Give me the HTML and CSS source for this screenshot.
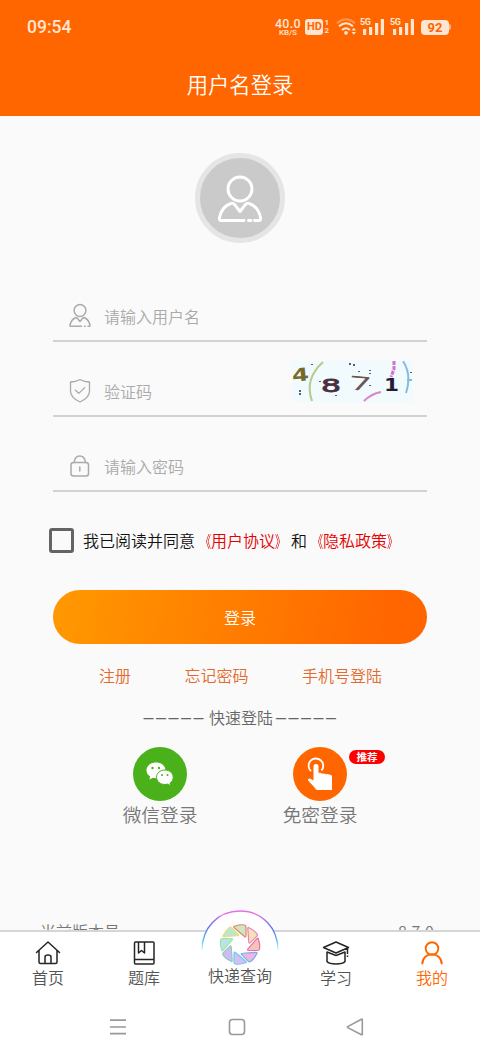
FILE: index.html
```html
<!DOCTYPE html>
<html lang="zh-CN">
<head>
<meta charset="utf-8">
<title>用户名登录</title>
<link rel="stylesheet" href="styles.css">
</head>
<body>
<div class="app">
  <header class="header">
    <div class="status">
      <span class="clock">09:54</span>
      <div class="indicators">
        <div class="speed"><span class="rate">40.0</span><span class="unit">KB/S</span></div>
        <span class="hd">HD</span>
        <div class="sims"><span>1</span><span>2</span></div>
        <svg class="wifi" width="21" height="18" viewBox="0 0 21 18" fill="none" stroke="#ffe5d2" stroke-width="2">
          <path d="M1 5.2Q10 -2.5 19 5.2" opacity=".35"/><path d="M3 8.3Q10 2.3 17 8.3"/><path d="M6 12Q10 8.400 14 12"/><circle cx="10" cy="14.800" r="1.900" fill="#ffe5d2" stroke="none"/><path d="M15.500 12.600l2.300-2.800 2.300 2.800zM15.500 14l2.300 2.800 2.300-2.800z" fill="#ffe5d2" stroke="none"/>
        </svg>
        <div class="signal"><span>5G</span><svg width="23" height="18" viewBox="0 0 23 18" fill="#ffe5d2"><path d="M2 11h3.200v6H2zM8 9h3.200v8H8zM14 5h3.200v12H14zM19.800 1H23v16h-3.200z"/></svg></div>
        <div class="signal second"><span>5G</span><svg width="23" height="18" viewBox="0 0 23 18" fill="#ffe5d2"><path d="M2 11h3.200v6H2zM8 9h3.200v8H8zM14 5h3.200v12H14zM19.800 1H23v16h-3.200z"/></svg></div>
        <span class="battery">92</span><i class="battery-tip"></i>
      </div>
    </div>
    <h1 class="title">用户名登录</h1>
  </header>

  <main class="content">
    <div class="avatar">
      <svg width="48" height="50" viewBox="0 0 48 50" fill="none" stroke="#fff" stroke-width="2.900" stroke-linecap="round" stroke-linejoin="round">
        <circle cx="24" cy="14" r="12"/><path d="M28 45.500H5q-2 0-1.500-3Q6 31 15 28.500q2-.7 3.600 1L24 36.500l5.400-7q1.600-1.700 3.600-1 9 2.500 11.500 14 .5 3-1.500 3h-4.500M32.500 45.500h2.500"/>
      </svg>
    </div>

    <form class="form">
      <div class="field">
        <svg class="field-icon" width="24" height="26" viewBox="0 0 24 26" fill="none" stroke="#aaa" stroke-width="1.500" stroke-linecap="round" stroke-linejoin="round">
          <circle cx="12" cy="7.500" r="5.900"/><path d="M13.500 23.300H3q-1.200 0-1-1.300Q3.500 16.200 7.500 14.700q1-.3 1.800.5L12 18.500l2.700-3.300q.8-.8 1.800-.5 4 1.500 5.500 7.300.2 1.300-1 1.300h-1M16.500 23.300h.8"/>
        </svg>
        <span class="placeholder">请输入用户名</span>
      </div>
      <div class="field">
        <svg class="field-icon" width="24" height="26" viewBox="0 0 24 26" fill="none" stroke="#aaa" stroke-width="1.300" stroke-linecap="round" stroke-linejoin="round">
          <path d="M12 1.500Q17 4.200 21.500 4v9.500Q21 20 12 24 3 20 2.500 13.500V4Q7 4.200 12 1.500zM7.500 12.200l3.300 3.200 5.900-5.800"/>
        </svg>
        <span class="placeholder">验证码</span>
        <svg class="captcha" width="121" height="41" viewBox="0 0 121 41">
          <rect width="121" height="41" fill="#f1fafc"/>
          <g font-family="DejaVu Sans, sans-serif" font-weight="bold">
            <text x="0" y="20" font-size="18" fill="#75692b" textLength="17" lengthAdjust="spacingAndGlyphs" transform="rotate(-5 8 14)">4</text>
            <text x="29" y="31" font-size="18" font-weight="normal" fill="#49303c" stroke="#49303c" stroke-width=".8" textLength="20" lengthAdjust="spacingAndGlyphs">8</text>
            <text x="92" y="30" font-size="18" fill="#251b36" textLength="15" lengthAdjust="spacingAndGlyphs">1</text>
          </g>
          <text x="57" y="29" font-family="DejaVu Sans, sans-serif" font-size="18" fill="#6a5351" stroke="#6a5351" stroke-width=".7" textLength="23" lengthAdjust="spacingAndGlyphs" transform="rotate(5 68 22)">7</text>
          <g fill="none" stroke-width="2">
            <path d="M31 1Q12 18 20 40" stroke="#b4cc8b"/><path d="M72 40q7-7 17-9" stroke="#d888c7"/><path d="M102 0v8l-3 8" stroke="#d76ed2" stroke-width="3" stroke-dasharray="4 1"/><path d="M111 0q9 14 3 32M115 19h5" stroke="#81bde3"/>
          </g>
          <path d="M19 3h2v1h-2zM57 2h2v2h-2zM61 3h2v2h-2zM66 10h2v1h-2zM77 9h2v1h-2zM77 12h2v1h-2zM7 29h2v2H7zM7 32h2v2H7zM27 20h2v1h-2zM118 11h2v1h-2zM43 34h2v1h-2zM77 24h2v1h-2z" fill="#48647e"/>
        </svg>
      </div>
      <div class="field">
        <svg class="field-icon" width="24" height="26" viewBox="0 0 24 26" fill="none" stroke="#aaa" stroke-width="1.500" stroke-linecap="round">
          <rect x="3" y="9.500" width="17.500" height="13.500" rx="2.500"/><path d="M6 9.500Q7 3 11.800 3t5.800 6.500M11.800 14v4"/>
        </svg>
        <span class="placeholder">请输入密码</span>
      </div>

      <div class="agreement">
        <i class="checkbox"></i>
        <span>我已阅读并同意<b><i class="open">《</i>用户协议<i class="close">》</i></b>和<b><i class="open">《</i>隐私政策<i class="close">》</i></b></span>
      </div>
      <div class="submit">登录</div>
      <div class="links"><span>注册</span><span>忘记密码</span><span>手机号登陆</span></div>
    </form>

    <div class="divider"><span class="dashes">–––––</span><span>快速登陆</span><span class="dashes">–––––</span></div>

    <div class="quick">
      <div class="quick-item">
        <div class="circle green">
          <svg width="54" height="54" viewBox="0 0 54 54">
            <path d="M23 15.500c-5.500 0-9.500 3.500-9.500 7.800 0 2.700 1.400 4.900 3.700 6.300l-.8 3 3.600-1.800q1.500.4 3 .4c5.500 0 9.500-3.500 9.500-7.900s-4-7.800-9.500-7.800z" fill="#fff"/>
            <path d="M32 23c-4.900 0-8.500 3.200-8.500 7.200s3.600 7.300 8.500 7.300q1.300 0 2.500-.4l3.300 1.700-.8-2.600c2-1.300 3.200-3.500 3.200-6 0-4-3.500-7.200-8.200-7.200z" fill="#fff" stroke="#4bb11b" stroke-width="1"/>
            <g fill="#4bb11b"><circle cx="19.500" cy="21" r="1.200"/><circle cx="26" cy="21" r="1.200"/><circle cx="29" cy="28" r="1"/><circle cx="34.500" cy="28" r="1"/></g>
          </svg>
        </div>
        <span>微信登录</span>
      </div>
      <div class="quick-item">
        <div class="circle orange">
          <svg width="54" height="54" viewBox="0 0 54 54">
            <path d="M18 24.200A7.300 7.300 0 1 1 28.500 23.500" fill="none" stroke="#fff" stroke-width="1.800"/>
            <path d="M20.500 19.500a2.500 2.500 0 0 1 5 0V26q2-1 3.800.8 2-1 3.800.5 2.200-.8 3.500.5 2.400-.5 2.400 2V43H23.500Q20 38.500 15.500 34q-1.500-2.500 1.500-2.500l3.500 2z" fill="#fff"/>
          </svg>
        </div>
        <span>免密登录</span>
        <em class="badge">推荐</em>
      </div>
    </div>

    <div class="version"><span>当前版本号</span><span class="number">8.7.0</span></div>
  </main>

  <nav class="tabs">
    <div class="tab">
      <svg width="28" height="26" viewBox="0 0 28 26" fill="none" stroke="#252525" stroke-width="1.500" stroke-linecap="round" stroke-linejoin="round"><path d="M2.500 12.500L14 2l11.500 10.500M5 10.500V22q0 1.500 1.500 1.500h15q1.500 0 1.500-1.500V10.500M11 23v-6q0-2 3-2t3 2v6"/></svg>
      <span>首页</span>
    </div>
    <div class="tab">
      <svg width="28" height="26" viewBox="0 0 28 26" fill="none" stroke="#252525" stroke-width="1.500" stroke-linejoin="round"><rect x="4.500" y="2" width="19.500" height="22" rx="1"/><path d="M4.500 19.500H24M8.500 2v11l3-2.500 3 2.500V2"/></svg>
      <span>题库</span>
    </div>
    <div class="tab center">
      <svg class="lens" width="80" height="58" viewBox="0 0 80 58">
        <defs>
          <linearGradient id="rim" x1="0" y1="1" x2="1" y2="1"><stop offset="0" stop-color="#4cc8ff"/><stop offset=".08" stop-color="#696fe4"/><stop offset=".25" stop-color="#df74eb"/><stop offset=".75" stop-color="#e170e8"/><stop offset=".93" stop-color="#696fe4"/><stop offset="1" stop-color="#4cc8ff"/></linearGradient>
          <linearGradient id="fade" x1="0" y1="0" x2="0" y2="1"><stop offset=".7" stop-color="#fff"/><stop offset="1" stop-color="#fff" stop-opacity="0"/></linearGradient>
          <mask id="rimFade"><rect width="80" height="42" fill="url(#fade)"/></mask>
          <path id="blade" d="M-5.500-18.300q5.500-2 10-1.200 1.500.3 1.500 2v8.500q0 2.500-1.800.8L-5.700-16.700q-1.300-1.300.2-1.600z"/>
        </defs>
        <path d="M2 40C2 18 18 1 40 1s38 17 38 39v10H2z" fill="#fff"/>
        <path d="M2 40C2 18 18 1 40 1s38 17 38 39" fill="none" stroke="url(#rim)" stroke-width="1.400" mask="url(#rimFade)"/>
        <g transform="translate(40 34.500)" stroke-width="1.200">
          <use href="#blade" fill="#c7eac4" stroke="#ee8066"/>
          <use href="#blade" transform="rotate(45)" fill="#f3e2b6" stroke="#ef83b8"/>
          <use href="#blade" transform="rotate(90)" fill="#f0c7bc" stroke="#ef6ca9"/>
          <use href="#blade" transform="rotate(135)" fill="#e8b9de" stroke="#7ea8f4"/>
          <use href="#blade" transform="rotate(180)" fill="#d8bdf3" stroke="#63ceef"/>
          <use href="#blade" transform="rotate(225)" fill="#cfbaf5" stroke="#8bcdb5"/>
          <use href="#blade" transform="rotate(270)" fill="#b7e3ed" stroke="#9fe49b"/>
          <use href="#blade" transform="rotate(315)" fill="#b8e8cf" stroke="#f0dd70"/>
        </g>
      </svg>
      <span>快递查询</span>
    </div>
    <div class="tab">
      <svg width="28" height="26" viewBox="0 0 28 26" fill="none" stroke="#252525" stroke-width="1.500" stroke-linejoin="round"><path d="M14 2l12.500 5.500L14 13 1.500 7.500zM5 12v9.500Q7 24 14 24t9-2.500V12l-9 3.500zM25.500 8v6M25.500 15.500v1.500"/></svg>
      <span>学习</span>
    </div>
    <div class="tab active">
      <svg width="28" height="26" viewBox="0 0 28 26" fill="none" stroke="#ff6600" stroke-width="1.900"><circle cx="14" cy="8.500" r="6.300"/><path d="M4.200 24.300C4.500 10.800 23.500 10.800 23.800 24.300"/></svg>
      <span>我的</span>
    </div>
  </nav>

  <div class="system">
    <svg width="18" height="18" viewBox="0 0 18 18" stroke="#999" stroke-width="1.700"><path d="M1 2.200h16M1 9h16M1 15.700h16"/></svg>
    <svg width="18" height="18" viewBox="0 0 18 18" fill="none" stroke="#999" stroke-width="1.600"><rect x="1.500" y="1.500" width="15" height="15" rx="3"/></svg>
    <svg width="18" height="18" viewBox="0 0 18 18" fill="none" stroke="#999" stroke-width="1.600" stroke-linejoin="round"><path d="M16.300 1.700v14.800Q16.300 17 15.500 16.700L1.700 9.600q-.7-.5 0-1L15.500 1.200q.8-.3.800.5z"/></svg>
  </div>
</div>
</body>
</html>
```

FILE: styles.css
```css
* { box-sizing: border-box; }
body {
  margin: 0;
  font-family: "Noto Sans CJK SC", sans-serif;
  font-weight: 350;
}
.app {
  width: 480px;
  height: 1056px;
  display: flex;
  flex-direction: column;
  overflow: hidden;
  background: #fff;
}
svg { display: block; flex: none; }

.header { height: 116px; flex: none; background: #ff6600; color: #fff; }
.status {
  height: 54px;
  display: flex;
  justify-content: space-between;
  align-items: center;
  padding: 0 29px 0 27px;
  color: #ffe5d2;
}
.clock { font: 500 17.500px/20px Roboto, sans-serif; }
.indicators { display: flex; align-items: center; font-family: Roboto, sans-serif; }
.speed { width: 27px; display: flex; flex-direction: column; align-items: center; margin-right: 4px; }
.rate { font-size: 12.500px; line-height: 10px; font-weight: 500; letter-spacing: .3px; }
.unit { font-size: 8px; line-height: 7px; font-weight: 500; }
.hd {
  width: 18px;
  height: 16px;
  border-radius: 3px;
  background: #ffe5d2;
  color: #ff6600;
  font-size: 11px;
  line-height: 16px;
  font-weight: 700;
  text-align: center;
}
.sims { display: flex; flex-direction: column; margin: 0 7px 0 1px; font-size: 8px; line-height: 8px; font-weight: 600; }
.signal { position: relative; margin-left: 4px; }
.signal.second { margin-left: 7px; }
.signal span { position: absolute; left: -1px; top: 0; font-size: 9px; line-height: 9px; font-weight: 700; letter-spacing: -.5px; }
.battery {
  width: 28px;
  height: 15px;
  margin-left: 7px;
  border-radius: 4px;
  background: #ffe5d2;
  color: #ff6600;
  font-size: 13px;
  line-height: 15px;
  font-weight: 700;
  text-align: center;
}
.battery-tip { width: 2px; height: 6px; border-radius: 0 2px 2px 0; background: #ffad7a; }
.title { margin: 15px 0 0; font-size: 21.300px; line-height: 30px; font-weight: 350; text-align: center; }

.content { flex: 0 0 814px; overflow: hidden; background: #fafafa; }
.avatar {
  width: 90px;
  height: 90px;
  margin: 37px auto 0;
  padding-top: 4px;
  border: 5px solid #e5e5e5;
  border-radius: 50%;
  background: #cacaca;
  display: flex;
  align-items: center;
  justify-content: center;
}
.form { margin: 24px 53px 0; }
.field {
  height: 75px;
  display: flex;
  align-items: flex-end;
  padding: 0 14px 11px 15px;
  border-bottom: 2px solid #d2d2d2;
}
.field-icon { margin-right: 12px; }
.placeholder { margin-bottom: 1.500px; color: #aaa; font-size: 16px; line-height: 24px; }
.captcha { margin: 0 0 2px auto; }
.agreement {
  height: 24px;
  margin: 36px -10px 0 -4px;
  display: flex;
  align-items: center;
  font-size: 16px;
  line-height: 24px;
  color: #111;
  white-space: nowrap;
}
.checkbox { width: 25px; height: 25px; margin-right: 9px; border: 3px solid #646464; border-radius: 3px; flex: none; }
.agreement b { font-weight: 350; color: #e60000; }
.open, .close { display: inline-block; font-style: normal; transform: scaleX(.66); }
.open { transform-origin: right; }
.close { transform-origin: left; }
.submit {
  height: 54px;
  margin-top: 38px;
  border-radius: 27px;
  background: linear-gradient(100deg, #ff9900, #ff6600 88%);
  color: #fff;
  font-size: 16px;
  line-height: 54px;
  text-align: center;
}
.links {
  display: flex;
  justify-content: space-between;
  margin-top: 19px;
  padding: 0 45px 0 46px;
  color: #e26b2d;
  font-size: 16px;
  line-height: 24px;
}
.divider {
  display: flex;
  justify-content: center;
  gap: 3px;
  margin: 18px 0 0 2px;
  color: #666;
  font-size: 16px;
  line-height: 24px;
}
.dashes { font-family: "Liberation Sans", sans-serif; font-size: 18px; letter-spacing: 2.500px; }
.quick { display: flex; margin: 18px 80px 0; }
.quick-item {
  position: relative;
  width: 160px;
  display: flex;
  flex-direction: column;
  align-items: center;
  color: #777;
  font-size: 18.700px;
  line-height: 26px;
}
.circle { width: 54px; height: 54px; border-radius: 50%; }
.green { background: #4bb11b; }
.orange { background: #ff6600; }
.badge {
  position: absolute;
  left: 109px;
  top: 3px;
  width: 36px;
  height: 14px;
  border-radius: 7px;
  background: #ff0000;
  color: #fff;
  font-size: 10.500px;
  line-height: 14px;
  font-style: normal;
  font-weight: 700;
  text-align: center;
}
.version {
  display: flex;
  justify-content: space-between;
  margin-top: 92px;
  padding: 0 46px 0 40px;
  color: #777;
  font-size: 16px;
  line-height: 24px;
}
.number { letter-spacing: .2px; }

.tabs {
  height: 67px;
  flex: none;
  display: flex;
  border-top: 2px solid #d5d5d5;
  background: #fff;
}
.tab {
  position: relative;
  flex: 1;
  display: flex;
  flex-direction: column;
  align-items: center;
  padding-top: 8px;
  color: #555;
  font-size: 16px;
  line-height: 22px;
}
.tab.active { color: #ff6600; }
.center { padding-top: 32px; }
.center span { position: relative; white-space: nowrap; }
.lens { position: absolute; left: 8px; top: -22px; }
.system {
  height: 60px;
  flex: none;
  display: flex;
  justify-content: center;
  align-items: center;
  gap: 100.500px;
  padding-right: 7px;
}
```
